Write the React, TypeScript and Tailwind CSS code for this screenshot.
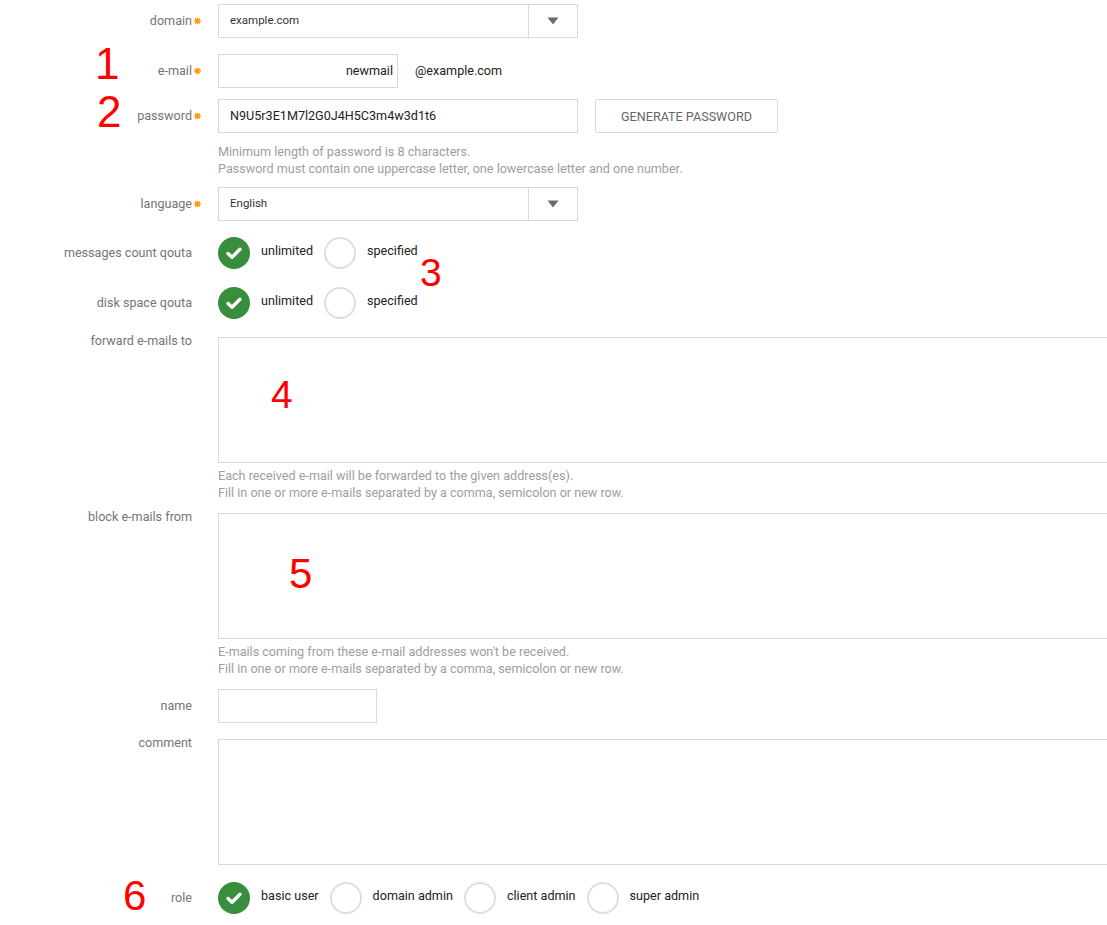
import React from "react";

const FONT = { fontFamily: "Roboto, 'Liberation Sans', sans-serif" };

function Asterisk() {
    return (
        <svg className="absolute right-[-9px] top-1/2 -translate-y-1/2 w-[7px] h-[7px]" viewBox="0 0 8 8">
            <g stroke="#ff9800" strokeWidth="1.6" strokeLinecap="round">
                <line x1="4" y1="0.8" x2="4" y2="7.2" />
                <line x1="0.8" y1="4" x2="7.2" y2="4" />
                <line x1="1.7" y1="1.7" x2="6.3" y2="6.3" />
                <line x1="6.3" y1="1.7" x2="1.7" y2="6.3" />
            </g>
        </svg>
    );
}

function Label({ text, required, top }: { text: string; required?: boolean; top?: boolean }) {
    return (
        <div className={`w-[192px] shrink-0 flex justify-end ${top ? "items-start" : "items-center"}`}>
            <span className={`relative text-[12.6px] text-[#757575] leading-[16px] ${top ? "-mt-[4px]" : "-mt-[1px]"}`}>
                {text}
                {required && <Asterisk />}
            </span>
        </div>
    );
}

function Select({ value }: { value: string }) {
    return (
        <div className="w-[360px] h-[34px] border border-[#d9d9d9] flex items-stretch bg-white">
            <div className="flex-1 flex items-center pl-[11px] text-[11.5px] text-[#333]">{value}</div>
            <div className="w-[49px] border-l border-[#d9d9d9] flex items-center justify-center">
                <svg width="12" height="8" viewBox="0 0 12 8">
                    <path d="M0.5 0.5h11L6 7.5z" fill="#6b6b6b" />
                </svg>
            </div>
        </div>
    );
}

function Radio({ checked, label }: { checked?: boolean; label: string }) {
    return (
        <div className="flex items-center">
            {checked ? (
                <div className="w-[32px] h-[32px] rounded-full bg-[#388e3c] flex items-center justify-center shrink-0">
                    <svg width="20" height="20" viewBox="0 0 20 20">
                        <path d="M4 10.5l4 3.8L16 6.2" fill="none" stroke="#fff" strokeWidth="3.4" strokeLinecap="round" strokeLinejoin="round" />
                    </svg>
                </div>
            ) : (
                <div className="w-[32px] h-[32px] rounded-full border-2 border-[#dedede] bg-white shrink-0" />
            )}
            <span className="ml-[11px] mr-[11px] mb-[4px] text-[12.6px] text-[#222]">{label}</span>
        </div>
    );
}

function Hints({ lines }: { lines: string[] }) {
    return (
        <div className="flex">
            <div className="w-[192px] shrink-0" />
            <div className="ml-[26px] text-[12.6px] leading-[17px] text-[#9e9e9e]">
                {lines.map((l) => (
                    <div key={l}>{l}</div>
                ))}
            </div>
        </div>
    );
}

function Mark({ n, className }: { n: string; className: string }) {
    return (
        <div
            className={`absolute leading-none text-[#ff0000] ${className}`}
            style={{ fontFamily: "'Liberation Sans', Arial, sans-serif" }}
        >
            {n}
        </div>
    );
}

export default function App() {
    return (
        <div className="relative w-full min-h-[925px] overflow-hidden bg-white" style={FONT}>
            <div className="flex flex-col pt-[4px]">
                {/* domain */}
                <div className="flex h-[34px]">
                    <Label text="domain" required />
                    <div className="ml-[26px]">
                        <Select value="example.com" />
                    </div>
                </div>

                {/* e-mail */}
                <div className="flex h-[34px] mt-[16px]">
                    <Label text="e-mail" required />
                    <div className="ml-[26px] flex items-center">
                        <div className="w-[180px] h-[34px] border border-[#d9d9d9] flex items-center justify-end pr-[4px] text-[12.6px] text-[#222]">
                            newmail
                        </div>
                        <span className="ml-[17px] text-[12.6px] text-[#222]">@example.com</span>
                    </div>
                </div>

                {/* password */}
                <div className="flex h-[34px] mt-[11px]">
                    <Label text="password" required />
                    <div className="ml-[26px] flex items-center">
                        <div className="w-[360px] h-[34px] border border-[#d9d9d9] flex items-center pl-[11px] text-[12.6px] text-[#222]">
                            N9U5r3E1M7l2G0J4H5C3m4w3d1t6
                        </div>
                        <button className="ml-[17px] w-[183px] h-[34px] border border-[#d9d9d9] rounded-[2px] text-[12.6px] text-[#666] uppercase pt-[2px]">
                            Generate password
                        </button>
                    </div>
                </div>
                <div className="mt-[10px]">
                    <Hints
                        lines={[
                            "Minimum length of password is 8 characters.",
                            "Password must contain one uppercase letter, one lowercase letter and one number.",
                        ]}
                    />
                </div>

                {/* language */}
                <div className="flex h-[34px] mt-[10px]">
                    <Label text="language" required />
                    <div className="ml-[26px]">
                        <Select value="English" />
                    </div>
                </div>

                {/* quotas */}
                <div className="flex h-[32px] mt-[16px]">
                    <Label text="messages count qouta" />
                    <div className="ml-[26px] flex">
                        <Radio checked label="unlimited" />
                        <Radio label="specified" />
                    </div>
                </div>
                <div className="flex h-[32px] mt-[18px]">
                    <Label text="disk space qouta" />
                    <div className="ml-[26px] flex">
                        <Radio checked label="unlimited" />
                        <Radio label="specified" />
                    </div>
                </div>

                {/* forward */}
                <div className="flex mt-[18px]">
                    <Label text="forward e-mails to" top />
                    <div className="ml-[26px] w-[920px] h-[126px] border border-[#d9d9d9] shrink-0" />
                </div>
                <div className="mt-[4px]">
                    <Hints
                        lines={[
                            "Each received e-mail will be forwarded to the given address(es).",
                            "Fill in one or more e-mails separated by a comma, semicolon or new row.",
                        ]}
                    />
                </div>

                {/* block */}
                <div className="flex mt-[12px]">
                    <Label text="block e-mails from" top />
                    <div className="ml-[26px] w-[920px] h-[126px] border border-[#d9d9d9] shrink-0" />
                </div>
                <div className="mt-[4px]">
                    <Hints
                        lines={[
                            "E-mails coming from these e-mail addresses won't be received.",
                            "Fill in one or more e-mails separated by a comma, semicolon or new row.",
                        ]}
                    />
                </div>

                {/* name */}
                <div className="flex h-[34px] mt-[12px]">
                    <Label text="name" />
                    <div className="ml-[26px] w-[159px] h-[34px] border border-[#d9d9d9]" />
                </div>

                {/* comment */}
                <div className="flex mt-[16px]">
                    <Label text="comment" top />
                    <div className="ml-[26px] w-[920px] h-[126px] border border-[#d9d9d9] shrink-0" />
                </div>

                {/* role */}
                <div className="flex h-[32px] mt-[17px]">
                    <Label text="role" />
                    <div className="ml-[26px] flex">
                        <Radio checked label="basic user" />
                        <Radio label="domain admin" />
                        <Radio label="client admin" />
                        <Radio label="super admin" />
                    </div>
                </div>
            </div>

            {/* annotations */}
            <Mark n="1" className="left-[95px] top-[42px] text-[44px]" />
            <Mark n="2" className="left-[97px] top-[90px] text-[44px]" />
            <Mark n="3" className="left-[420px] top-[253px] text-[39px]" />
            <Mark n="4" className="left-[271px] top-[375px] text-[39px]" />
            <Mark n="5" className="left-[289px] top-[553px] text-[42px]" />
            <Mark n="6" className="left-[123px] top-[875px] text-[42px]" />
        </div>
    );
}
